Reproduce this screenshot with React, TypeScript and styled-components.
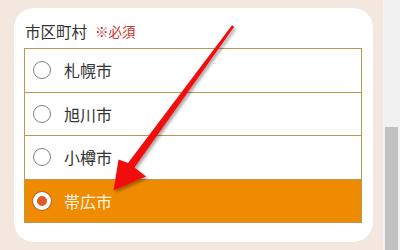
import styled, { createGlobalStyle } from "styled-components";

const GlobalStyle = createGlobalStyle`
  html, body {
    margin: 0;
    padding: 0;
    background: #f3e7df;
  }
  body {
    width: 400px;
    height: 250px;
    overflow: hidden;
    font-family: "Noto Sans CJK JP", "Noto Sans", sans-serif;
  }
`;

const cities = ["札幌市", "旭川市", "小樽市", "帯広市"];
const selected = 3;

function App() {
  return (
    <>
      <GlobalStyle />
      <Page>
        <Main>
          <Card>
            <Label>
              市区町村<Required>※必須</Required>
            </Label>
            <List>
              {cities.map((c, i) => (
                <Row key={c} $active={i === selected}>
                  <Radio $active={i === selected} />
                  <City $active={i === selected}>{c}</City>
                </Row>
              ))}
            </List>
            <Arrow viewBox="0 0 400 250" width="400" height="250">
              <defs>
                <filter id="sh" x="-20%" y="-20%" width="140%" height="140%">
                  <feDropShadow dx="2" dy="2" stdDeviation="1.6" floodColor="#000" floodOpacity="0.35" />
                </filter>
              </defs>
              <polygon
                filter="url(#sh)"
                fill="#f20d0d"
                points="232,25.2 128,163 118.5,159.5 113.5,190.5 146,176.5 134.5,167.5 234.2,26.8"
              />
            </Arrow>
          </Card>
        </Main>
        <Track>
          <Thumb />
        </Track>
      </Page>
    </>
  );
}

export default App;

const Page = styled.div`
  display: flex;
  width: 400px;
  height: 250px;
`;

const Main = styled.div`
  flex: 1;
  padding: 8px 10px 0 14px;
`;

const Card = styled.div`
  position: relative;
  width: 359px;
  height: 234px;
  box-sizing: border-box;
  background: #fff;
  border-radius: 20px;
  padding: 12px 11px 0 10px;
`;

const Label = styled.div`
  display: flex;
  align-items: center;
  height: 22px;
  margin-bottom: 6px;
  padding-left: 1px;
  font-size: 15.5px;
  color: #333;
`;

const Required = styled.span`
  margin-left: 8px;
  font-size: 13.5px;
  color: #d0302c;
`;

const List = styled.div`
  border: 1px solid #b9984f;
  display: flex;
  flex-direction: column;
`;

const Row = styled.div<{ $active: boolean }>`
  display: flex;
  align-items: center;
  height: 42.5px;
  padding-left: 8px;
  background: ${(p) => (p.$active ? "#ef8b00" : "#fff")};
  & + & {
    border-top: 1px solid #b9984f;
  }
`;

const Radio = styled.span<{ $active: boolean }>`
  width: 18px;
  height: 18px;
  box-sizing: border-box;
  border-radius: 50%;
  border: ${(p) => (p.$active ? "4px solid #fff" : "1px solid #808080")};
  background: ${(p) => (p.$active ? "#e05a28" : "#fff")};
  box-shadow: ${(p) => (p.$active ? "0 0 0 1px #b06a30" : "none")};
`;

const City = styled.span<{ $active: boolean }>`
  margin-left: 13px;
  font-size: 16px;
  color: ${(p) => (p.$active ? "#fff4e0" : "#333")};
`;

const Arrow = styled.svg`
  position: absolute;
  left: -14px;
  top: -8px;
  pointer-events: none;
`;

const Track = styled.div`
  width: 17px;
  height: 250px;
  background: #f1f1f1;
  padding: 127px 2px 0;
  box-sizing: border-box;
`;

const Thumb = styled.div`
  height: 123px;
  background: #c1c1c1;
`;
